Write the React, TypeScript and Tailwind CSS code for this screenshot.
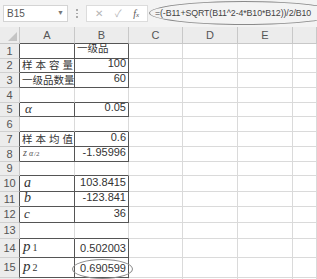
import React from 'react';

const boxed = new Set([1, 2, 3, 5, 7, 8, 10, 11, 12, 14, 15]);
const rowHeights: Record<number, string> = {
  1: 'h-[14.5px]', 2: 'h-[14.5px]', 3: 'h-[15px]', 4: 'h-[14.5px]', 5: 'h-[14.5px]', 6: 'h-[14.5px]',
  7: 'h-[15.5px]', 8: 'h-[15px]', 9: 'h-[14px]', 10: 'h-[16px]', 11: 'h-[15px]', 12: 'h-[16px]',
  13: 'h-[16px]', 14: 'h-[19px]', 15: 'h-[20px]', 16: 'h-[20px]',
};

const serif = "font-['Liberation_Serif','DejaVu_Serif',serif] italic";

// Chinese labels in column A use distributed alignment
const Spread = ({ text }: { text: string }) => (
  <span className="flex w-full justify-between pr-[1px] text-[10.5px] leading-[12px]">
    {text.split('').map((ch, i) => (
      <span key={i}>{ch}</span>
    ))}
  </span>
);

const cellA: Record<number, React.ReactNode> = {
  2: <Spread text="样本容量" />,
  3: <Spread text="一级品数量" />,
  5: <span className={`${serif} text-[13px] leading-[13px] pl-[3px]`}>α</span>,
  7: <Spread text="样本均值" />,
  8: (
    <span className={`${serif} text-[10px] leading-[12px] pl-[1px] text-[#555]`}>
      z<span className="text-[8px] pl-[2px]">α</span>
      <span className="text-[7px] not-italic pl-[1px]">/2</span>
    </span>
  ),
  10: <span className={`${serif} text-[14px] leading-[14px] pl-[2px]`}>a</span>,
  11: <span className={`${serif} text-[14px] leading-[14px] pl-[2px]`}>b</span>,
  12: <span className={`${serif} text-[13px] leading-[14px] pl-[2px]`}>c</span>,
  14: (
    <span className={`${serif} text-[15px] leading-[16px] pl-[1px]`}>
      p<span className="not-italic text-[10px] pl-[2px]">1</span>
    </span>
  ),
  15: (
    <span className={`${serif} text-[15px] leading-[16px] pl-[1px]`}>
      p<span className="not-italic text-[10px] pl-[2px]">2</span>
    </span>
  ),
};

const cellB: Record<number, string> = {
  1: '一级品',
  2: '100',
  3: '60',
  5: '0.05',
  7: '0.6',
  8: '-1.95996',
  10: '103.8415',
  11: '-123.841',
  12: '36',
  14: '0.502003',
  15: '0.690599',
};

const cols = ['A', 'B', 'C', 'D', 'E', ''];

export default function App() {
  const rows = Array.from({ length: 16 }, (_, i) => i + 1);

  return (
    <div className="relative w-[317px] h-[279px] overflow-hidden bg-white text-[#333] font-['Liberation_Sans','Noto_Sans_CJK_SC',sans-serif]">
      {/* formula bar */}
      <div className="h-[27px] bg-[#f3f3f3] flex items-start pt-[5px] pl-[3px] overflow-hidden">
        <div className="shrink-0 w-[65px] h-[17px] bg-white border border-[#d4d4d4] flex items-center justify-between px-[3px] text-[10px] text-[#555]">
          <span>B15</span>
          <span className="text-[7px] text-[#777]">▼</span>
        </div>
        <div className="shrink-0 w-[18px] h-[17px] flex flex-col items-center justify-center gap-[2px]">
          <span className="w-[1.5px] h-[1.5px] bg-[#aaa]" />
          <span className="w-[1.5px] h-[1.5px] bg-[#aaa]" />
          <span className="w-[1.5px] h-[1.5px] bg-[#aaa]" />
        </div>
        <div className="shrink-0 w-[62px] h-[17px] bg-white border border-[#dcdcdc] flex items-center justify-around px-[2px] text-[10px] text-[#b5b5b5]">
          <span>✕</span>
          <span>✓</span>
          <span className={`${serif} text-[#555] text-[10px]`}>f<span className="text-[7px]">x</span></span>
        </div>
        <div className="shrink-0 pl-[7px] h-[17px] flex items-center text-[8.8px] tracking-[-0.1px] text-[#444] whitespace-nowrap">
          =(-B11+SQRT(B11^2-4*B10*B12))/2/B10
        </div>
      </div>
      <div className="absolute left-[149px] top-[1px] w-[190px] h-[24px] rounded-[50%] border border-[#8a8a8a]" />

      {/* sheet */}
      <div className="grid grid-cols-[20px_55px_54px_54px_55px_55px_1fr]">
        <div className="h-[17px] bg-[#ececec] border-r border-b border-[#c8c8c8] relative">
          <div className="absolute right-[2px] bottom-[2px] w-0 h-0 border-l-[9px] border-l-transparent border-b-[9px] border-b-[#c4c4c4]" />
        </div>
        {cols.map((c, i) => (
          <div
            key={i}
            className={`h-[17px] bg-[#ececec] border-r border-b flex items-center justify-center text-[11px] text-[#555] ${
              i < 2 ? 'border-b-[#555] border-r-[#c8c8c8]' : 'border-[#c8c8c8]'
            }`}
          >
            {c}
          </div>
        ))}

        {rows.map((r) => {
          const h = rowHeights[r];
          const box = boxed.has(r);
          const bottomDark = box || boxed.has(r + 1);
          return (
            <React.Fragment key={r}>
              <div
                className={`${h} bg-[#ececec] border-b border-b-[#d0d0d0] border-r flex items-center justify-center text-[11px] text-[#555] ${
                  box ? 'border-r-[#555]' : 'border-r-[#c8c8c8]'
                }`}
              >
                {r < 16 ? r : ''}
              </div>
              <div
                className={`${h} border-r border-b flex items-end pl-[2px] pb-[1px] text-[11px] whitespace-nowrap ${
                  box ? 'border-r-[#555]' : 'border-r-[#dadada]'
                } ${bottomDark ? 'border-b-[#555]' : 'border-b-[#dadada]'}`}
              >
                {cellA[r]}
              </div>
              <div
                className={`${h} relative border-r border-b flex items-end pb-[1px] whitespace-nowrap ${
                  r === 1 ? 'justify-start pl-[2px] text-[10.5px]' : 'justify-end pr-[2px] text-[11px]'
                } ${box ? 'border-r-[#555]' : 'border-r-[#dadada]'} ${
                  bottomDark ? 'border-b-[#555]' : 'border-b-[#dadada]'
                }`}
              >
                {cellB[r]}
                {r === 15 && (
                  <div className="absolute left-[-3px] top-[1px] w-[61px] h-[20px] rounded-[50%] border border-[#8a8a8a]" />
                )}
              </div>
              {[0, 1, 2, 3].map((k) => (
                <div key={k} className={`${h} border-r border-b border-[#dadada]`} />
              ))}
            </React.Fragment>
          );
        })}
      </div>
    </div>
  );
}
